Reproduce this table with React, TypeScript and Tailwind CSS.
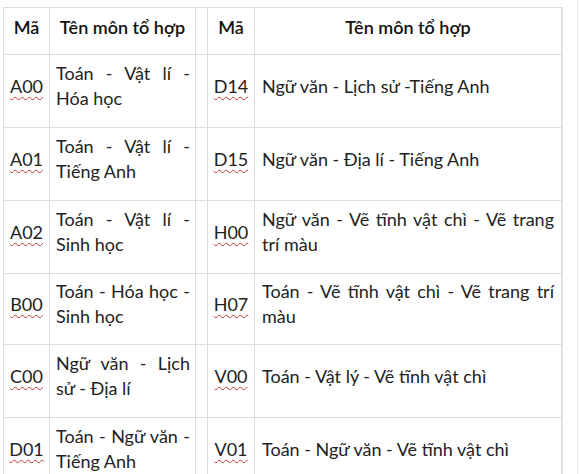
import React from "react";

const rows: { a: string; b: string[]; c: string; d: string[]; h: string }[] = [
  { a: "A00", b: ["Toán - Vật lí -", "Hóa học"], c: "D14", d: ["Ngữ văn - Lịch sử -Tiếng Anh"], h: "h-[73px]" },
  { a: "A01", b: ["Toán - Vật lí -", "Tiếng Anh"], c: "D15", d: ["Ngữ văn - Địa lí - Tiếng Anh"], h: "h-[73px]" },
  { a: "A02", b: ["Toán - Vật lí -", "Sinh học"], c: "H00", d: ["Ngữ văn - Vẽ tĩnh vật chì - Vẽ trang", "trí màu"], h: "h-[73px]" },
  { a: "B00", b: ["Toán - Hóa học -", "Sinh học"], c: "H07", d: ["Toán - Vẽ tĩnh vật chì - Vẽ trang trí", "màu"], h: "h-[71px]" },
  { a: "C00", b: ["Ngữ văn - Lịch", "sử - Địa lí"], c: "V00", d: ["Toán - Vật lý - Vẽ tĩnh vật chì"], h: "h-[73px]" },
  { a: "D01", b: ["Toán - Ngữ văn -", "Tiếng Anh"], c: "V01", d: ["Toán - Ngữ văn - Vẽ tĩnh vật chì"], h: "h-[73px]" },
];

const code =
  "underline decoration-wavy decoration-[#c0392b] decoration-1 underline-offset-[3px]";

function Lines({ lines }: { lines: string[] }) {
  return (
    <>
      {lines.map((l, i) =>
        i < lines.length - 1 ? (
          <div key={i} className="whitespace-nowrap text-justify [text-align-last:justify]">
            {l}
          </div>
        ) : (
          <div key={i} className="whitespace-nowrap text-left">
            {l}
          </div>
        )
      )}
    </>
  );
}

export default function App() {
  return (
    <div
      className="w-[580px] h-[474px] overflow-hidden bg-white text-[#222] relative"
      style={{ fontFamily: "Lato, 'Noto Sans', sans-serif" }}
    >
      <div className="absolute top-0 bottom-0 left-[577px] w-px bg-[#ececec]" />
      <div className="absolute top-[7px] bottom-0 left-[562px] w-px bg-[#e6e6e6]" />
      <div className="pt-[7px] pl-[3px]">
        <table className="border-collapse table-fixed w-[558px] text-[18px] leading-[25px]">
          <colgroup>
            <col className="w-[46px]" />
            <col className="w-[146px]" />
            <col className="w-[12px]" />
            <col className="w-[47px]" />
            <col className="w-[307px]" />
          </colgroup>
          <tbody>
            <tr className="h-[47px]">
              <td className="border border-[#dcdcdc] text-center align-middle pt-[2px] pb-[10px] font-semibold text-[#111]">Mã</td>
              <td className="border border-[#dcdcdc] text-center align-middle pt-[2px] pb-[10px] font-semibold text-[#111]">Tên môn tổ hợp</td>
              <td className="border border-[#dcdcdc]"></td>
              <td className="border border-[#dcdcdc] text-center align-middle pt-[2px] pb-[10px] font-semibold text-[#111]">Mã</td>
              <td className="border border-[#dcdcdc] text-center align-middle pt-[2px] pb-[10px] font-semibold text-[#111]">Tên môn tổ hợp</td>
            </tr>
            {rows.map((r) => (
              <tr key={r.a} className={r.h}>
                <td className="border border-[#dcdcdc] text-center align-middle pt-[4px] pb-[14px]">
                  <span className={code}>{r.a}</span>
                </td>
                <td className="border border-[#dcdcdc] align-middle pt-[4px] pb-[14px] pl-[6px] pr-[5px]">
                  <Lines lines={r.b} />
                </td>
                <td className="border border-[#dcdcdc]"></td>
                <td className="border border-[#dcdcdc] text-center align-middle pt-[4px] pb-[14px]">
                  <span className={code}>{r.c}</span>
                </td>
                <td className="border border-[#dcdcdc] align-middle pt-[4px] pb-[14px] pl-[7px] pr-[7px]">
                  <Lines lines={r.d} />
                </td>
              </tr>
            ))}
          </tbody>
        </table>
      </div>
    </div>
  );
}
